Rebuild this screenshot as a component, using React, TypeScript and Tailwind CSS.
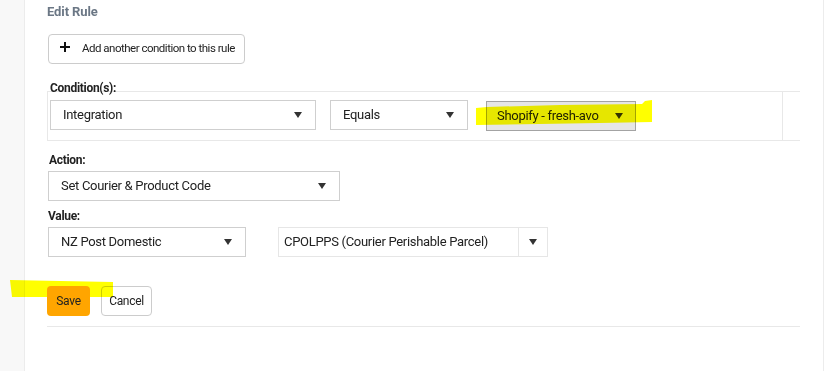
import React from "react";

const Arrow = () => (
  <svg width="8" height="6" viewBox="0 0 8 6" className="shrink-0">
    <path d="M0 0 H8 L4 6 Z" fill="#333" />
  </svg>
);

const Select = ({
  label,
  className,
}: {
  label: string;
  className: string;
}) => (
  <div
    className={`flex h-[30px] items-center justify-between border border-[#cfcfcf] bg-white pl-[12px] pr-[13px] text-[13px] text-[#222] ${className}`}
  >
    <span className="whitespace-nowrap">{label}</span>
    <Arrow />
  </div>
);

export default function App() {
  return (
    <div className="relative flex h-[371px] w-[835px] overflow-hidden bg-white font-['Roboto',sans-serif] tracking-[-0.3px]">
      <div className="w-[25px] shrink-0 border-r border-[#ececec] bg-[#f8f8f8]" />
      <div className="w-[798px] shrink-0 pl-[22px] pr-[23px] pt-[4px]">
        <div className="text-[13px] font-bold leading-[16px] tracking-[-0.1px] text-[#6b7785]">Edit Rule</div>
        <button className="ml-px mt-[14px] flex h-[30px] w-[197px] items-center rounded-[4px] border border-[#cccccc] bg-white pl-[11px] text-[12px] text-[#222]">
          <svg width="10" height="10" viewBox="0 0 10 10" className="mb-[4px] shrink-0">
            <path d="M4 0 H6 V4 H10 V6 H6 V10 H4 V6 H0 V4 H4 Z" fill="#111" />
          </svg>
          <span className="ml-[12px] whitespace-nowrap text-[11.5px] tracking-[-0.5px]">Add another condition to this rule</span>
        </button>
        <div className="ml-[3px] mt-[17px] h-[10px] text-[12px] font-bold leading-[15px] text-[#222]">Condition(s):</div>
        <div className="flex h-[50px] border-y border-l border-[#e8e8e8]">
          <div className="flex flex-1 items-start pl-[2px] pt-[8px]">
            <Select label="Integration" className="w-[266px]" />
            <Select label="Equals" className="ml-[14px] w-[138px]" />
            <div className="ml-[18px] mt-px flex h-[30px] w-[150px] items-center justify-between border border-[#a3a3a3] bg-[#e6e6e6] pl-[10px] pr-[12px] text-[13px] text-[#222]">
              <span className="whitespace-nowrap">Shopify - fresh-avo</span>
              <Arrow />
            </div>
          </div>
          <div className="w-[18px] border-l border-[#e8e8e8]" />
        </div>
        <div className="ml-[2px] mt-[12px] text-[12px] font-bold leading-[15px] text-[#222]">Action:</div>
        <Select label="Set Courier & Product Code" className="ml-[1px] mt-[3px] w-[292px]" />
        <div className="ml-[1px] mt-[8px] text-[12px] font-bold leading-[15px] text-[#222]">Value:</div>
        <div className="ml-[1px] mt-[3px] flex items-start">
          <Select label="NZ Post Domestic" className="w-[198px]" />
          <div className="ml-[32px] flex h-[30px] w-[270px] items-stretch border border-[#e6e6e6] bg-white text-[13px] text-[#222]">
            <div className="flex flex-1 items-center whitespace-nowrap pl-[5px]">CPOLPPS (Courier Perishable Parcel)</div>
            <div className="flex w-[29px] items-center justify-center border-l border-[#e6e6e6]">
              <Arrow />
            </div>
          </div>
        </div>
        <div className="mt-[29px] flex items-center">
          <button className="h-[30px] w-[43px] rounded-[4px] bg-[#ffa500] text-[12px] text-[#222]">Save</button>
          <button className="ml-[11px] h-[30px] w-[51px] rounded-[4px] border border-[#cccccc] bg-white text-[12px] text-[#222]">Cancel</button>
        </div>
        <div className="mt-[10px] border-t border-[#e8e8e8]" />
      </div>
      <div className="flex-1 border-l border-[#ececec] bg-white" />
      <svg
        className="pointer-events-none absolute left-0 top-0 mix-blend-multiply"
        width="835"
        height="371"
        viewBox="0 0 835 371"
      >
        <path
          d="M476 108 L487 107 L560 105 L642 104 L645 101 L652 100 L652 122 L600 123 L476 125 Z"
          fill="#ffff00"
        />
        <path d="M10 280 L60 281 L113 282 L113 297 L12 297 Z" fill="#ffff00" />
      </svg>
    </div>
  );
}
